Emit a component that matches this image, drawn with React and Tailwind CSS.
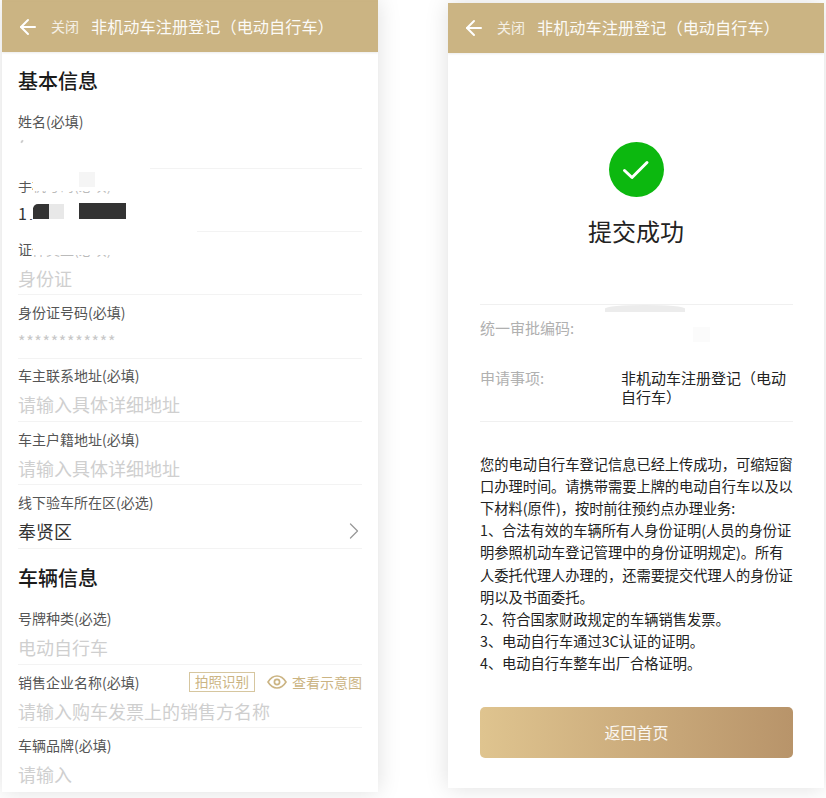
import React from "react";
import { ArrowLeft, ChevronRight } from "lucide-react";

const FONT = "font-['Noto_Sans_CJK_SC','Noto_Sans',sans-serif]";

function Header() {
  return (
    <div className="flex h-[50px] shrink-0 items-center bg-[#cbb483] pb-[1px] pl-[14px] text-white shadow-[0_1px_2px_rgba(0,0,0,0.08)]">
      <ArrowLeft size={24} strokeWidth={2} className="text-white" />
      <span className="ml-[11px] text-[14px] text-white/80">关闭</span>
      <span className="ml-[12px] whitespace-nowrap text-[16.2px] text-white/95">非机动车注册登记（电动自行车）</span>
    </div>
  );
}

function Field({ label, value, tone = "placeholder", extra, children, noBorder }) {
  return (
    <div className={`relative flex h-[63.33px] shrink-0 flex-col pt-[6.5px] ${noBorder ? "" : "border-b border-[#f3f3f3]"}`}>
      <div className="flex h-[20px] items-center justify-between">
        <span className="text-[14px] leading-[20px] text-[#555]">{label}</span>
        {extra}
      </div>
      <div className={`mt-[6px] flex h-[26px] items-center justify-between text-[18px] leading-[26px] ${tone === "placeholder" ? "text-[#cfcfcf]" : "text-[#333]"}`}>
        {value}
        {children}
      </div>
    </div>
  );
}

function Left() {
  return (
    <div className="flex h-[792px] w-[376px] shrink-0 flex-col overflow-hidden bg-white shadow-[0_0_22px_rgba(0,0,0,0.13)]">
      <div className="h-[2px] shrink-0 bg-[#cbb483]" />
      <Header />
      <div className="relative flex flex-col pl-[16px] pr-[16px]">
        <h2 className="mt-[14px] h-[29px] text-[20px] font-medium leading-[29px] text-[#1a1a1a]">基本信息</h2>
        <div className="mt-[10.5px]">
          <div className="relative h-[63.33px] border-b border-[#f3f3f3] pt-[5.5px]">
            <div className="text-[14px] leading-[20px] text-[#555]">姓名(必填)</div>
            <div className="absolute left-[3px] top-[34px] h-[3px] w-[2px] rotate-[35deg] bg-[#ccc]" />
            <div className="absolute -bottom-[1px] left-0 h-[1px] w-[132px] bg-white" />
          </div>
          <div className="relative h-[63.33px] border-b border-[#f3f3f3] pt-[6.5px]">
            <div className="text-[14px] leading-[20px] text-[#555]">手机号码(必填)</div>
            <div className="mt-[7px] text-[16px] leading-[22px] text-[#333]">17</div>
            <div className="absolute left-0 top-0 h-[12px] w-[100px] bg-white" />
            <div className="absolute left-[15px] top-[6px] h-[16px] w-[85px] bg-white" />
            <div className="absolute left-[15px] top-[22px] h-[4px] w-[85px] bg-white/60" />
            <div className="absolute left-[61px] top-[3px] h-[15px] w-[16px] bg-[#f5f5f5]" />
            <div className="absolute left-[9px] top-[37px] h-[13px] w-[6px] bg-white" />
            <div className="absolute left-[15px] top-[35px] h-[15px] w-[16px] rounded-tl-[5px] bg-[#333]" />
            <div className="absolute left-[31px] top-[35px] h-[15px] w-[15px] bg-[#e8e8e8]" />
            <div className="absolute left-[61px] top-[34px] h-[16px] w-[47px] bg-[#333]" />
            <div className="absolute -bottom-[1px] left-0 h-[1px] w-[179px] bg-white" />
          </div>
          <div className="relative h-[63.33px] border-b border-[#f3f3f3] pt-[6.5px]">
            <div className="text-[14px] leading-[20px] text-[#555]">证件类型(必填)</div>
            <div className="mt-[6px] text-[18px] leading-[26px] text-[#cfcfcf]">身份证</div>
            <div className="absolute left-[15px] top-[3px] h-[20px] w-[85px] bg-white" />
            <div className="absolute left-[15px] top-[23px] h-[3px] w-[85px] bg-white/60" />
          </div>
          <Field label="身份证号码(必填)" value={<span className="text-[16px] tracking-[0.7px] text-[#c8c8c8]">************</span>} />
          <Field label="车主联系地址(必填)" value="请输入具体详细地址" />
          <Field label="车主户籍地址(必填)" value="请输入具体详细地址" />
          <Field label="线下验车所在区(必选)" value="奉贤区" tone="filled">
            <ChevronRight size={28} strokeWidth={1.1} className="mr-[-6px] text-[#999]" />
          </Field>
        </div>
        <h2 className="mt-[14px] h-[29px] text-[20px] font-medium leading-[29px] text-[#1a1a1a]">车辆信息</h2>
        <div className="mt-[10px]">
          <Field label="号牌种类(必选)" value="电动自行车" />
          <Field
            label="销售企业名称(必填)"
            value="请输入购车发票上的销售方名称"
            extra={
              <div className="flex items-center">
                <span className="flex h-[20px] w-[66px] items-center justify-center border border-[#d6c69f] text-[13.5px] leading-none text-[#cbb483]">拍照识别</span>
                <svg width="20" height="14" viewBox="0 0 20 14" fill="none" className="ml-[12px]" stroke="#cbb483">
                  <path d="M1 7C3.500 3 6.500 1 10 1s6.500 2 9 6c-2.500 4-5.500 6-9 6s-6.500-2-9-6z" strokeWidth="1.600" />
                  <circle cx="10" cy="7" r="2.600" strokeWidth="1.700" />
                </svg>
                <span className="ml-[5px] text-[14px] leading-none text-[#cbb483]">查看示意图</span>
              </div>
            }
          />
          <Field label="车辆品牌(必填)" value="请输入" noBorder />
        </div>
      </div>
    </div>
  );
}

const NOTICE = [
  "您的电动自行车登记信息已经上传成功，可缩短窗口办理时间。请携带需要上牌的电动自行车以及以下材料(原件)，按时前往预约点办理业务:",
  "1、合法有效的车辆所有人身份证明(人员的身份证明参照机动车登记管理中的身份证明规定)。所有人委托代理人办理的，还需要提交代理人的身份证明以及书面委托。",
  "2、符合国家财政规定的车辆销售发票。",
  "3、电动自行车通过3C认证的证明。",
  "4、电动自行车整车出厂合格证明。",
];

function Right() {
  return (
    <div className="mt-[3px] flex h-[785px] w-[376px] shrink-0 flex-col overflow-hidden bg-white shadow-[0_0_22px_rgba(0,0,0,0.13)]">
      <Header />
      <div className="flex flex-col items-center">
        <div className="mt-[89px] flex h-[55px] w-[55px] items-center justify-center rounded-full bg-[#0cb80f]">
          <svg width="30" height="24" viewBox="0 0 30 24" fill="none">
            <path d="M3.500 12.500 L11 19.500 L26 4.500" stroke="white" strokeWidth="3" strokeLinecap="round" strokeLinejoin="round" />
          </svg>
        </div>
        <div className="mt-[17px] text-[24px] leading-[34px] text-[#222]">提交成功</div>
      </div>
      <div className="ml-[32px] mr-[31px] mt-[56px] flex flex-col">
        <div className="relative h-[118px] border-y border-[#f0f0f0] pt-[13px]">
          <div className="absolute left-[125px] top-0 h-[7px] w-[80px] rounded-t-[100%] bg-[#ececec]" />
          <div className="absolute left-[213px] top-[22px] h-[15px] w-[17px] bg-[#fbfbfb]" />
          <div className="text-[15px] leading-[20px] text-[#b0b0b0]">统一审批编码:</div>
          <div className="mt-[30px] flex">
            <span className="w-[141px] shrink-0 text-[15px] leading-[20px] text-[#b0b0b0]">申请事项:</span>
            <span className="text-[15px] leading-[19px] text-[#222]">非机动车注册登记（电动自行车）</span>
          </div>
        </div>
        <div className="mt-[30.5px] text-[14.22px] leading-[22.2px] text-[#222]">
          {NOTICE.map((t) => (
            <div key={t}>{t}</div>
          ))}
        </div>
        <button className="mt-[32.5px] flex h-[51px] w-full items-center justify-center rounded-[5px] bg-gradient-to-r from-[#dfc48f] to-[#b8946a] pb-[2px] text-[16px] text-white/90">
          返回首页
        </button>
      </div>
    </div>
  );
}

export default function App() {
  return (
    <div className={`flex h-[798px] w-[826px] overflow-hidden bg-white pl-[2px] ${FONT}`}>
      <Left />
      <div className="ml-[70px]">
        <Right />
      </div>
    </div>
  );
}
